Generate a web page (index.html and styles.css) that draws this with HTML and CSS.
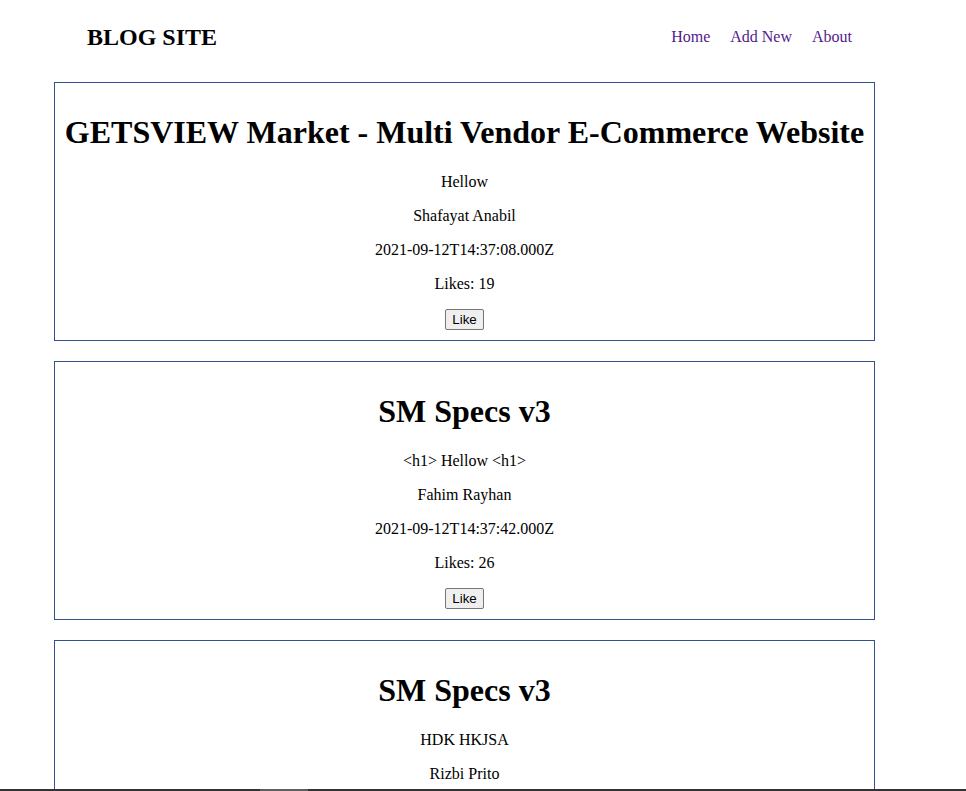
FILE: index.html
```html
<!DOCTYPE html>
<html>
<head>
<meta charset="utf-8">
<link rel="stylesheet" href="styles.css">
</head>
<body>
<div class="page">
  <header class="header">
    <h2 class="brand">BLOG SITE</h2>
    <nav class="nav">
      <a href="#" class="nav-link">Home</a>
      <a href="#" class="nav-link">Add New</a>
      <a href="#" class="nav-link">About</a>
    </nav>
  </header>
  <main class="posts">
    <article class="card">
      <h1 class="title">GETSVIEW Market - Multi Vendor E-Commerce Website</h1>
      <p class="line">Hellow</p>
      <p class="line">Shafayat Anabil</p>
      <p class="line">2021-09-12T14:37:08.000Z</p>
      <p class="line">Likes: 19</p>
      <button class="like">Like</button>
    </article>
    <article class="card">
      <h1 class="title">SM Specs v3</h1>
      <p class="line">&lt;h1&gt; Hellow &lt;h1&gt;</p>
      <p class="line">Fahim Rayhan</p>
      <p class="line">2021-09-12T14:37:42.000Z</p>
      <p class="line">Likes: 26</p>
      <button class="like">Like</button>
    </article>
    <article class="card">
      <h1 class="title">SM Specs v3</h1>
      <p class="line">HDK HKJSA</p>
      <p class="line">Rizbi Prito</p>
      <p class="line">2021-09-12T14:38:10.000Z</p>
      <p class="line">Likes: 12</p>
      <button class="like">Like</button>
    </article>
  </main>
</div>
<div class="bottom-bar"><span class="bottom-thumb"></span></div>
</body>
</html>
```

FILE: styles.css
```css
html, body {
  margin: 0;
  padding: 0;
  background: #ffffff;
}
body {
  font-family: "Liberation Serif", "Times New Roman", serif;
  font-size: 16px;
  color: #000;
}
.page {
  width: 821px;
  margin-left: 54px;
}
.header {
  height: 74px;
  display: flex;
  align-items: center;
  justify-content: space-between;
  padding: 0 23px 0 33px;
  margin-bottom: 8px;
}
.brand {
  margin: 0;
  font-size: 24px;
  font-weight: bold;
}
.nav {
  display: flex;
  gap: 20px;
}
.nav-link {
  color: #551a8b;
  text-decoration: none;
  font-size: 16px;
}
.posts {
  display: flex;
  flex-direction: column;
  gap: 20px;
}
.card {
  border: 1px solid #34508e;
  padding: 10px 0;
  text-align: center;
}
.title {
  font-size: 32px;
  font-weight: bold;
  margin: 21.44px 0;
  white-space: nowrap;
}
.line {
  margin: 16px 0;
}
.like {
  font-family: "Liberation Sans", Arial, sans-serif;
  font-size: 13.33px;
  padding: 1px 6px;
  height: 21px;
  border: 1px solid #767676;
  border-radius: 2px;
  background: #efefef;
  color: #000;
}
.bottom-bar {
  position: fixed;
  left: 0;
  right: 0;
  bottom: 0;
  height: 2px;
  background: #333333;
}
.bottom-thumb {
  position: absolute;
  left: 260px;
  width: 48px;
  top: 0;
  height: 2px;
  background: #5f5f5f;
}
```
